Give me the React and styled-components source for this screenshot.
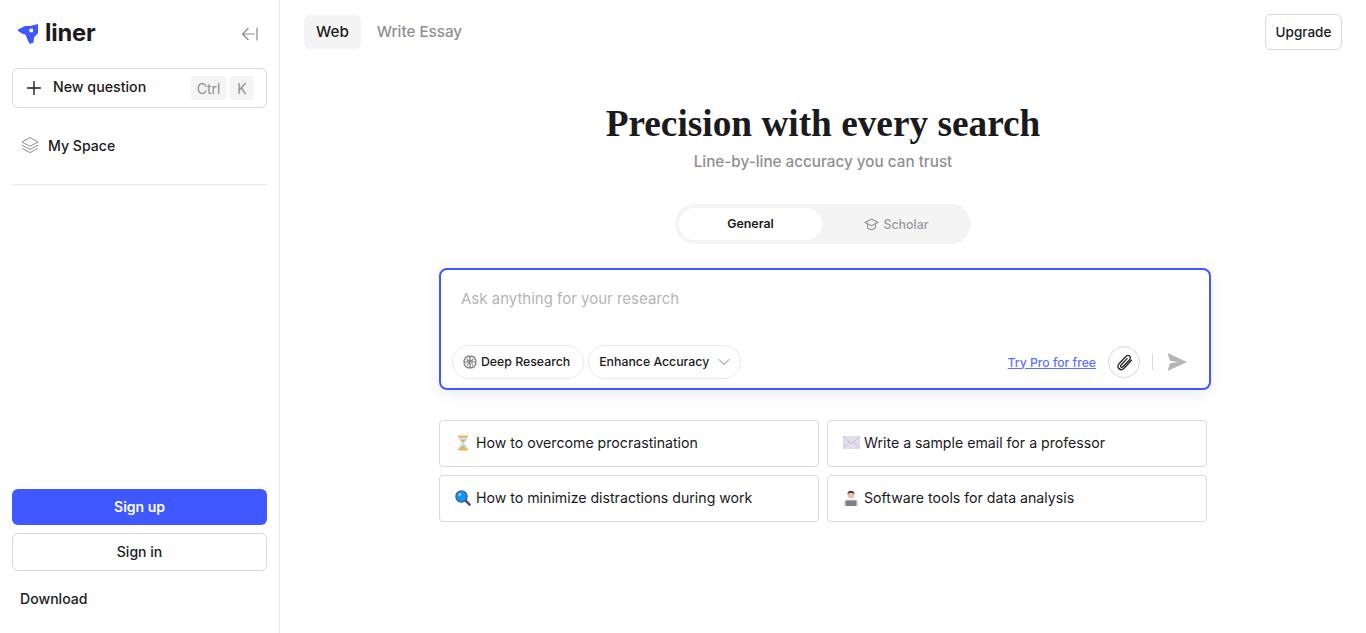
import styled, { createGlobalStyle } from "styled-components";
import { FiPlus, FiChevronDown } from "react-icons/fi";

const GlobalStyle = createGlobalStyle`
  html, body {
    margin: 0;
    padding: 0;
    height: 100%;
    background: #fff;
    font-family: Inter, "Liberation Sans", sans-serif;
    color: #1b1b1d;
  }
  * { box-sizing: border-box; }
`;

function LinerLogo() {
  return (
    <svg width="20" height="20" viewBox="0 0 20 20">
      <path
        fill="#4058ff"
        fillRule="evenodd"
        d="M0 5.500 7 2 12 2 20 0 20 9.300 16.300 13 15.300 18.700 12 20 10 17 7.500 10.500 4.700 10 0 7ZM11.500 4.800 11.500 8.200 15 8.200 15 4.800Z"
      />
    </svg>
  );
}

function CollapseIcon() {
  return (
    <svg width="20" height="20" viewBox="0 0 20 20" fill="none" stroke="#8a8a8d" strokeWidth="1.2">
      <path d="M17 16.500V3.500M14.500 10H2.500M8.500 4 2.500 10l6 6" />
    </svg>
  );
}

function LayersIcon() {
  return (
    <svg width="18" height="18" viewBox="0 0 18 18" fill="none" stroke="#8f8f92" strokeWidth="1" strokeLinejoin="round">
      <path d="M9 1.500 17 6 9 10.200 1 6Z" />
      <path d="M1 9.200 9 13.400 17 9.200" />
      <path d="M1 12.400 9 16.600 17 12.400" />
    </svg>
  );
}

function ScholarIcon() {
  return (
    <svg width="15" height="15" viewBox="0 0 15 15" fill="none" stroke="#9a9a9d" strokeWidth="1.2" strokeLinejoin="round">
      <path d="M7.500 2 14 5.400 7.500 8.800 1 5.400Z" />
      <path d="M3.500 7v3.600c1 1.400 2.400 2 4 2s3-.6 4-2V7" />
    </svg>
  );
}

function BrainIcon() {
  return (
    <svg width="14" height="14" viewBox="0 0 15 15" fill="none" stroke="#77777a" strokeWidth="1.300">
      <path d="M7.500 1.800C6.800.9 5 .9 4.400 2 3 2 2 3 2.200 4.300 1 5 .8 6.600 1.500 7.500c-.7 1-.5 2.500.7 3.200C2 12 3 13 4.400 13c.6 1.100 2.400 1.100 3.100.2.700.9 2.500.9 3.100-.2 1.400 0 2.400-1 2.200-2.300 1.200-.7 1.400-2.200.7-3.200.7-.9.500-2.500-.7-3.200C13 3 12 2 10.600 2c-.6-1.100-2.400-1.100-3.100-.2Z" />
      <path d="M7.500 1.800v11.400M4 4.500 5.700 6.200H7.500M1.500 7.500H5L6 8.800H7.500M11 4.500 9.300 6.200H7.500M13.500 7.500H10L9 8.800M4.400 11 5.500 9.800M10.600 11 9.500 9.800" />
    </svg>
  );
}

function ClipIcon() {
  return (
    <svg width="19" height="19" viewBox="0 0 18 18" fill="none" stroke="#2a2a2c" strokeWidth="1.300" strokeLinecap="round">
      <path d="M15.600 6.800 8.600 14.400c-1.500 1.500-3.600 1.600-4.900.4s-1.200-3.300.3-4.800l6.300-6.700c1.100-1.100 2.700-1.200 3.600-.3s.9 2.500-.2 3.600L7.600 13c-.6.6-1.400.6-1.900.2s-.5-1.300.1-1.900l5.600-6" />
    </svg>
  );
}

function SendIcon() {
  return (
    <svg width="22" height="20" viewBox="0 0 22 20">
      <path fill="#b5b5b7" d="M1.500 1 21 10 1.500 19 4 11.200 12 10 4 8.800Z" />
    </svg>
  );
}

function HourglassEmoji() {
  return (
    <svg width="14" height="16" viewBox="0 0 14 16">
      <path fill="#bfe0f7" d="M3 2h8v2.500L8 8l3 3.500V14H3v-2.500L6 8 3 4.500Z" />
      <path fill="#f4a93b" d="M4 4.800h6L7 7.800ZM3.600 13.600 7 10.600l3.400 3Z" />
      <rect x="2" y="0.600" width="10" height="1.800" fill="#f6ac3f" />
      <rect x="2" y="13.600" width="10" height="1.800" fill="#f6ac3f" />
    </svg>
  );
}

function EnvelopeEmoji() {
  return (
    <svg width="17" height="13" viewBox="0 0 17 13">
      <rect width="17" height="13" fill="#e3dceb" />
      <path fill="none" stroke="#c5bbd3" strokeWidth="0.900" d="M0 0.500 8.500 7.500 17 0.500M0 12.600 6.400 5.800M17 12.600 10.600 5.800" />
    </svg>
  );
}

function LensEmoji() {
  return (
    <svg width="16" height="16" viewBox="0 0 16 16">
      <path stroke="#5c4a8c" strokeWidth="2.600" strokeLinecap="round" d="M10.500 10.500 14.600 14.600" />
      <circle cx="6.500" cy="6.500" r="5.600" fill="#0f9be8" stroke="#3f4f9c" strokeWidth="1.200" />
      <circle cx="4.800" cy="4.600" r="1.300" fill="#8fd6fa" />
    </svg>
  );
}

function TechnologistEmoji() {
  return (
    <svg width="16" height="16" viewBox="0 0 16 16">
      <path fill="#e4e4e5" d="M0.500 16v-3.400C0.500 10.600 3 9.600 8 9.600s7.500 1 7.500 3V16Z" />
      <circle cx="8" cy="5" r="3.400" fill="#eec0a4" />
      <path fill="#4a4040" d="M4.500 4.600C4.300 1.800 6 0.800 8 0.800s3.700 1 3.500 3.800C10.500 3.400 9.500 3 8 3S5.500 3.400 4.500 4.600Z" />
      <rect x="2.500" y="10.400" width="11" height="5.600" fill="#7e8087" />
    </svg>
  );
}

const suggestions = [
  { icon: <HourglassEmoji />, text: "How to overcome procrastination" },
  { icon: <EnvelopeEmoji />, text: "Write a sample email for a professor" },
  { icon: <LensEmoji />, text: "How to minimize distractions during work" },
  { icon: <TechnologistEmoji />, text: "Software tools for data analysis" },
];

export default function App() {
  return (
    <Page>
      <GlobalStyle />
      <Sidebar>
        <BrandRow>
          <Brand>
            <LinerLogo />
            <BrandName>liner</BrandName>
          </Brand>
          <CollapseIcon />
        </BrandRow>
        <NewQuestion>
          <FiPlus size={22} strokeWidth={1.5} color="#1b1b1d" />
          <NewLabel>New question</NewLabel>
          <Keys>
            <Key>Ctrl</Key>
            <Key>K</Key>
          </Keys>
        </NewQuestion>
        <SpaceRow>
          <LayersIcon />
          <span>My Space</span>
        </SpaceRow>
        <Divider />
        <Spacer />
        <PrimaryButton>Sign up</PrimaryButton>
        <SecondaryButton>Sign in</SecondaryButton>
        <Download>Download</Download>
      </Sidebar>

      <Main>
        <TopBar>
          <Tabs>
            <Tab $active>Web</Tab>
            <Tab>Write Essay</Tab>
          </Tabs>
          <Upgrade>Upgrade</Upgrade>
        </TopBar>

        <Center>
          <Title>Precision with every search</Title>
          <Subtitle>Line-by-line accuracy you can trust</Subtitle>
          <Toggle>
            <ToggleItem $active>General</ToggleItem>
            <ToggleItem>
              <ScholarIcon />
              Scholar
            </ToggleItem>
          </Toggle>

          <AskBox>
            <Placeholder>Ask anything for your research</Placeholder>
            <AskFooter>
              <Pills>
                <Pill $end={13} $gap={4}>
                  <BrainIcon />
                  Deep Research
                </Pill>
                <Pill $end={6} $gap={5}>
                  Enhance Accuracy
                  <FiChevronDown size={20} strokeWidth={1.1} color="#77777a" />
                </Pill>
              </Pills>
              <Actions>
                <TryPro>Try Pro for free</TryPro>
                <ClipButton>
                  <ClipIcon />
                </ClipButton>
                <Separator />
                <SendIcon />
              </Actions>
            </AskFooter>
          </AskBox>

          <Suggestions>
            {suggestions.map((item) => (
              <Suggestion key={item.text}>
                <EmojiSlot>{item.icon}</EmojiSlot>
                {item.text}
              </Suggestion>
            ))}
          </Suggestions>
        </Center>
      </Main>
    </Page>
  );
}

const Page = styled.div`
  display: flex;
  height: 100vh;
  overflow: hidden;
`;

const Sidebar = styled.aside`
  width: 280px;
  flex-shrink: 0;
  display: flex;
  flex-direction: column;
  padding: 0 12px 26px;
  border-right: 1px solid #e8e8e9;
`;

const BrandRow = styled.div`
  display: flex;
  justify-content: space-between;
  align-items: center;
  height: 68px;
  padding: 0 7px 0 6px;
`;

const Brand = styled.div`
  display: flex;
  align-items: center;
  gap: 7px;
`;

const BrandName = styled.span`
  font-size: 23.7px;
  font-weight: 700;
  letter-spacing: -0.2px;
  color: #1b1b1d;
  line-height: 1;
  margin-bottom: 2px;
`;

const NewQuestion = styled.button`
  display: flex;
  align-items: center;
  height: 40px;
  padding: 0 12px 0 10px;
  background: #fff;
  border: 1px solid #d9d9da;
  border-radius: 6px;
  font-family: inherit;
`;

const NewLabel = styled.span`
  margin-left: 8px;
  font-size: 14.2px;
  font-weight: 450;
  color: #1b1b1d;
  position: relative;
  top: -2px;
`;

const Keys = styled.div`
  display: flex;
  gap: 4px;
  margin-left: auto;
`;

const Key = styled.span`
  display: flex;
  align-items: center;
  justify-content: center;
  height: 24px;
  min-width: 24px;
  padding: 0 5.5px;
  background: #f4f4f4;
  border-radius: 4px;
  font-size: 14px;
  color: #8f8f92;
`;

const SpaceRow = styled.div`
  display: flex;
  align-items: center;
  gap: 9px;
  height: 36px;
  margin-top: 19px;
  padding-left: 9px;
  font-size: 14.1px;
  font-weight: 450;
  color: #1b1b1d;
`;

const Divider = styled.div`
  height: 1px;
  margin-top: 21px;
  background: #e8e8e9;
`;

const Spacer = styled.div`
  flex: 1;
`;

const PrimaryButton = styled.button`
  height: 36px;
  padding: 0 0 2px;
  background: #4058ff;
  color: #fff;
  border: none;
  border-radius: 6px;
  font-family: inherit;
  font-size: 14px;
  font-weight: 600;
`;

const SecondaryButton = styled.button`
  height: 38px;
  margin-top: 8px;
  padding: 0 0 2px;
  background: #fff;
  color: #1b1b1d;
  border: 1px solid #d9d9da;
  border-radius: 6px;
  font-family: inherit;
  font-size: 14px;
  font-weight: 450;
`;

const Download = styled.div`
  margin-top: 19px;
  padding-left: 8px;
  font-size: 14.1px;
  font-weight: 450;
  line-height: 17px;
  color: #1b1b1d;
`;

const Main = styled.main`
  flex: 1;
  min-width: 0;
  display: flex;
  flex-direction: column;
`;

const TopBar = styled.div`
  display: flex;
  justify-content: space-between;
  align-items: flex-start;
  padding: 14px 24px 0;
`;

const Tabs = styled.div`
  display: flex;
  gap: 4px;
  margin-top: 1px;
`;

const Tab = styled.div`
  display: flex;
  align-items: center;
  height: 34px;
  padding: 0 12px 2px;
  border-radius: 6px;
  font-size: 15.2px;
  font-weight: 450;
  background: ${({ $active }) => ($active ? "#f4f4f4" : "transparent")};
  color: ${({ $active }) => ($active ? "#1b1b1d" : "#8f8f92")};
`;

const Upgrade = styled.button`
  height: 36px;
  width: 77px;
  background: #fff;
  border: 1px solid #d9d9da;
  border-radius: 6px;
  font-family: inherit;
  font-size: 13.5px;
  font-weight: 450;
  color: #1b1b1d;
`;

const Center = styled.div`
  width: 768px;
  margin: 0 auto;
  display: flex;
  flex-direction: column;
  align-items: center;
`;

const Title = styled.h1`
  margin: 50px 0 0;
  font-family: "Liberation Serif", serif;
  font-size: 37.3px;
  font-weight: 700;
  line-height: 48px;
  color: #1b1b1d;
  white-space: nowrap;
`;

const Subtitle = styled.div`
  margin-top: 4px;
  font-size: 15.25px;
  font-weight: 450;
  line-height: 20px;
  color: #8f8f92;
`;

const Toggle = styled.div`
  display: flex;
  width: 296px;
  height: 40px;
  margin-top: 32px;
  padding: 4px;
  background: #f4f4f4;
  border-radius: 20px;
`;

const ToggleItem = styled.div`
  flex: ${({ $active }) => ($active ? "0 0 143px" : "1")};
  display: flex;
  align-items: center;
  justify-content: center;
  gap: 4px;
  padding-left: ${({ $active }) => ($active ? "0" : "4px")};
  padding-bottom: ${({ $active }) => ($active ? "2px" : "0")};
  border-radius: 16px;
  font-size: 12.4px;
  font-weight: ${({ $active }) => ($active ? 600 : 450)};
  background: ${({ $active }) => ($active ? "#fff" : "transparent")};
  color: ${({ $active }) => ($active ? "#1b1b1d" : "#9a9a9d")};
`;

const AskBox = styled.div`
  align-self: flex-start;
  width: 772px;
  height: 122px;
  margin-top: 24px;
  padding: 19px 12px 9px;
  display: flex;
  flex-direction: column;
  justify-content: space-between;
  background: #fff;
  border: 2px solid #4058ff;
  border-radius: 8px;
  box-shadow: 0 4px 16px rgba(0, 0, 0, 0.08);
`;

const Placeholder = styled.div`
  padding-left: 8px;
  font-size: 15px;
  line-height: 20px;
  color: #b5b5b7;
`;

const AskFooter = styled.div`
  display: flex;
  justify-content: space-between;
  align-items: center;
`;

const Pills = styled.div`
  display: flex;
  gap: 4px;
  margin-left: -1px;
`;

const Pill = styled.div`
  display: flex;
  align-items: center;
  gap: ${({ $gap }) => $gap}px;
  height: 34px;
  padding: 0 ${({ $end }) => $end}px 2px 10px;
  background: #fff;
  border: 1px solid #e8e8e9;
  border-radius: 17px;
  font-size: 12.3px;
  font-weight: 450;
  color: #1b1b1d;
  white-space: nowrap;

  svg {
    position: relative;
    top: 1px;
  }
`;

const Actions = styled.div`
  display: flex;
  align-items: center;
  margin-right: 9px;
`;

const TryPro = styled.a`
  font-size: 12.2px;
  font-weight: 450;
  color: #5f72ff;
  text-decoration: underline;
`;

const ClipButton = styled.div`
  display: flex;
  align-items: center;
  justify-content: center;
  width: 32px;
  height: 32px;
  margin-left: 12px;
  border: 1px solid #d9d9da;
  border-radius: 50%;
`;

const Separator = styled.div`
  width: 1px;
  height: 16px;
  margin: 0 13px 0 12px;
  background: #d9d9da;
`;

const Suggestions = styled.div`
  width: 100%;
  display: grid;
  grid-template-columns: 380px 380px;
  gap: 8px;
  margin-top: 30px;
`;

const Suggestion = styled.div`
  display: flex;
  align-items: center;
  height: 47px;
  padding: 0 0 2px 14px;
  background: #fff;
  border: 1px solid #d9d9da;
  border-radius: 4px;
  font-size: 14.15px;
  color: #1b1b1d;
`;

const EmojiSlot = styled.span`
  display: flex;
  align-items: center;
  justify-content: center;
  width: 18px;
  margin-right: 4px;
`;
